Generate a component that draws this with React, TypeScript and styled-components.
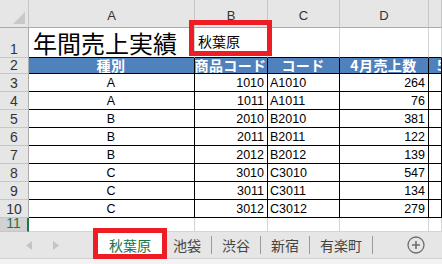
import { Fragment } from 'react';
import styled, { createGlobalStyle } from 'styled-components';

const GlobalStyle = createGlobalStyle`
  html, body {
    margin: 0;
    padding: 0;
    background: #ffffff;
    overflow: hidden;
  }
  body {
    font-family: 'Liberation Sans', 'Noto Sans CJK JP', sans-serif;
  }
`;

const Page = styled.div`
  width: 442px;
  height: 264px;
  display: flex;
  flex-direction: column;
  overflow: hidden;
`;

const Sheet = styled.div`
  display: grid;
  grid-template-columns: 29px 166px 73px 72px 89px 1fr;
  grid-template-rows: 28px 30px 16px repeat(8, 18px) 14px;
`;

type Tone = 'grid' | 'table' | 'tableTop';

const Cell = styled.div<{ $tone?: Tone; $align?: 'left' | 'center' | 'right'; $valign?: 'center' | 'end' }>`
  box-sizing: border-box;
  position: relative;
  display: flex;
  align-items: ${(p) => (p.$valign === 'end' ? 'flex-end' : 'center')};
  justify-content: ${(p) => (p.$align === 'right' ? 'flex-end' : p.$align === 'center' ? 'center' : 'flex-start')};
  padding: 0 3px 0 2px;
  font-size: 12px;
  color: #000;
  white-space: nowrap;
  border-right: 1px solid ${(p) => (p.$tone === 'table' ? '#000' : '#d4d4d4')};
  border-bottom: 1px solid ${(p) => (p.$tone === 'grid' || !p.$tone ? '#d4d4d4' : '#000')};
`;

const ColHead = styled.div`
  box-sizing: border-box;
  display: flex;
  align-items: flex-end;
  justify-content: center;
  padding-bottom: 4px;
  background: #e6e6e6;
  border-right: 1px solid #c6c6c6;
  border-bottom: 1px solid #ababab;
  font-size: 13px;
  color: #333;
`;

const Corner = styled(ColHead)`
  justify-content: flex-end;
  padding: 0 3px 3px 0;
`;

const RowHead = styled.div<{ $active?: boolean }>`
  box-sizing: border-box;
  display: flex;
  align-items: flex-end;
  justify-content: center;
  background: ${(p) => (p.$active ? '#d2d2d2' : '#e6e6e6')};
  border-right: ${(p) => (p.$active ? '2px solid #217346' : '1px solid #ababab')};
  border-bottom: 1px solid #c6c6c6;
  font-size: 14px;
  line-height: 15px;
  color: ${(p) => (p.$active ? '#217346' : '#333')};
  overflow: hidden;
`;

const Title = styled(Cell)`
  font-family: 'Noto Sans CJK JP', sans-serif;
  font-size: 24px;
  line-height: 28px;
  padding-left: 4px;
  overflow: visible;
`;

const StoreName = styled(Cell)`
  font-family: 'Noto Sans CJK JP', sans-serif;
  font-size: 14px;
  padding-left: 3px;
  padding-bottom: 4px;
`;

const HeadCell = styled(Cell)`
  background: #4f81bd;
  color: #fff;
  font-family: 'Noto Sans CJK JP', sans-serif;
  font-weight: 700;
  font-size: 14px;
  line-height: 16px;
  letter-spacing: 0.4px;
  overflow: hidden;
  align-items: flex-end;
`;

const DataCell = styled(Cell)`
  font-size: 12.5px;
  padding-top: 1px;
`;

const Highlight = styled.div<{ $top: number; $left: number; $w: number; $h: number }>`
  position: absolute;
  top: ${(p) => p.$top}px;
  left: ${(p) => p.$left}px;
  width: ${(p) => p.$w}px;
  height: ${(p) => p.$h}px;
  box-sizing: border-box;
  border: 5px solid #ee1c25;
  pointer-events: none;
  z-index: 2;
`;

const TabBar = styled.div`
  height: 26px;
  display: flex;
  align-items: stretch;
  background: #e6e6e6;
`;

const Nav = styled.div`
  width: 96px;
  display: flex;
  align-items: center;
  gap: 21px;
  padding-left: 26px;
  box-sizing: border-box;
`;

const Tab = styled.div<{ $active?: boolean }>`
  position: relative;
  display: flex;
  align-items: center;
  justify-content: center;
  padding: ${(p) => (p.$active ? '0 12px 0 13px' : '0 10px')};
  min-width: ${(p) => (p.$active ? '67px' : '0')};
  box-sizing: border-box;
  background: ${(p) => (p.$active ? '#ffffff' : 'transparent')};
  color: ${(p) => (p.$active ? '#217346' : '#444')};
  font-family: 'Noto Sans CJK JP', sans-serif;
  font-size: 14px;
`;

const Divider = styled.div`
  width: 1px;
  height: 18px;
  align-self: center;
  background: #9a9a9a;
`;

const AddButton = styled.div`
  margin-left: 34px;
  display: flex;
  align-items: center;
`;

const Footer = styled.div`
  flex: 1;
  background: #f3f3f3;
  border-top: 1px solid #d0d0d0;
`;

const rows: [string, number, string, number][] = [
  ['A', 1010, 'A1010', 264],
  ['A', 1011, 'A1011', 76],
  ['B', 2010, 'B2010', 381],
  ['B', 2011, 'B2011', 122],
  ['B', 2012, 'B2012', 139],
  ['C', 3010, 'C3010', 547],
  ['C', 3011, 'C3011', 134],
  ['C', 3012, 'C3012', 279],
];

const tabs = ['池袋', '渋谷', '新宿', '有楽町'];

const Arrow = ({ dir }: { dir: 'left' | 'right' }) => (
  <svg width="6" height="9" viewBox="0 0 6 9">
    <path d={dir === 'left' ? 'M6 0 L0 4.5 L6 9 Z' : 'M0 0 L6 4.5 L0 9 Z'} fill="#c4c4c4" />
  </svg>
);

const App = () => {
  return (
    <Page>
      <GlobalStyle />
      <Sheet>
        <Corner>
          <svg width="12" height="12" viewBox="0 0 12 12">
            <path d="M12 0 L12 12 L0 12 Z" fill="#c8c8c8" />
          </svg>
        </Corner>
        {['A', 'B', 'C', 'D', ''].map((c, i) => (
          <ColHead key={i}>{c}</ColHead>
        ))}

        <RowHead>1</RowHead>
        <Title $tone="tableTop" $valign="end">年間売上実績</Title>
        <StoreName $tone="tableTop">
          秋葉原
          <Highlight $top={-8} $left={-6} $w={83} $h={36} />
        </StoreName>
        <Cell $tone="tableTop" />
        <Cell $tone="tableTop" />
        <Cell $tone="tableTop" />

        <RowHead>2</RowHead>
        <HeadCell $tone="table" $align="center">種別</HeadCell>
        <HeadCell $tone="table" $align="center">商品コード</HeadCell>
        <HeadCell $tone="table" $align="center">コード</HeadCell>
        <HeadCell $tone="table" $align="center">4月売上数</HeadCell>
        <HeadCell $tone="table" style={{ paddingLeft: 8 }}>5月売上数</HeadCell>

        {rows.map(([kind, id, code, sales], i) => (
          <Fragment key={code}>
            <RowHead>{i + 3}</RowHead>
            <DataCell $tone="table" $align="center">{kind}</DataCell>
            <DataCell $tone="table" $align="right">{id}</DataCell>
            <DataCell $tone="table">{code}</DataCell>
            <DataCell $tone="table" $align="right">{sales}</DataCell>
            <DataCell $tone="table" />
          </Fragment>
        ))}

        <RowHead $active>11</RowHead>
        <Cell />
        <Cell />
        <Cell />
        <Cell />
        <Cell />
      </Sheet>

      <TabBar>
        <Nav>
          <Arrow dir="left" />
          <Arrow dir="right" />
        </Nav>
        <Tab $active>
          秋葉原
          <Highlight $top={-4} $left={-3} $w={74} $h={31} />
        </Tab>
        {tabs.map((t) => (
          <Fragment key={t}>
            <Tab>{t}</Tab>
            <Divider />
          </Fragment>
        ))}
        <AddButton>
          <svg width="18" height="18" viewBox="0 0 18 18">
            <circle cx="9" cy="9" r="8" fill="none" stroke="#6d6d6d" strokeWidth="1.3" />
            <path d="M9 5 V13 M5 9 H13" stroke="#6d6d6d" strokeWidth="1.6" />
          </svg>
        </AddButton>
      </TabBar>
      <Footer />
    </Page>
  );
};

export default App;
